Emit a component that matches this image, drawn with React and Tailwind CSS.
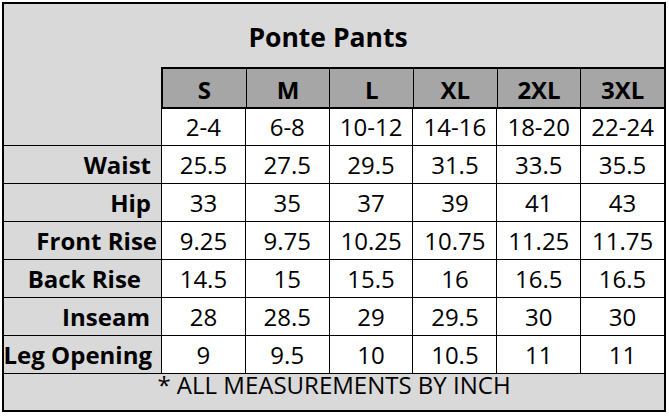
import React from 'react';

const sizes = ['S', 'M', 'L', 'XL', '2XL', '3XL'];
const ranges = ['2-4', '6-8', '10-12', '14-16', '18-20', '22-24'];

// pr = right padding of the label, the sheet doesn't line them up exactly
const rows = [
  { label: 'Waist', pr: 'pr-[10px]', values: ['25.5', '27.5', '29.5', '31.5', '33.5', '35.5'] },
  { label: 'Hip', pr: 'pr-[10px]', values: ['33', '35', '37', '39', '41', '43'] },
  { label: 'Front Rise', pr: 'pr-[4px]', values: ['9.25', '9.75', '10.25', '10.75', '11.25', '11.75'] },
  { label: 'Back Rise', pr: 'pr-[20px]', values: ['14.5', '15', '15.5', '16', '16.5', '16.5'] },
  { label: 'Inseam', pr: 'pr-[11px]', values: ['28', '28.5', '29', '29.5', '30', '30'] },
  { label: 'Leg Opening', pr: 'pr-[9px]', values: ['9', '9.5', '10', '10.5', '11', '11'] },
];

const Cell = ({ children }) => (
  <div className="flex-1 flex items-center justify-center border-l border-black bg-white">
    {children}
  </div>
);

export default function App() {
  return (
    <div className="w-[669px] h-[417px] bg-white pt-[2px] pl-[2px] font-['Open_Sans',sans-serif] text-black leading-none">
      <div className="w-[664px] h-[410px] border-2 border-black flex flex-col bg-[#d9d9d9] overflow-hidden">
        {/* title */}
        <div className="h-[63px] shrink-0 flex items-center justify-center pt-[3px] pr-[12px] text-[26.5px] font-bold">
          Ponte Pants
        </div>

        {/* sizes + ranges */}
        <div className="h-[79px] shrink-0 flex border-b border-black">
          <div className="w-[157px] shrink-0" />
          <div className="flex-1 flex flex-col">
            <div className="h-[42px] shrink-0 flex border-t-2 border-l-2 border-b-2 border-black bg-[#a6a6a6] text-[24px] font-bold">
              {sizes.map((s, i) => (
                <div
                  key={s}
                  className={`flex-1 flex items-center justify-center pt-[3px] ${i > 0 ? 'border-l border-black' : ''}`}
                >
                  {s}
                </div>
              ))}
            </div>
            <div className="h-[36px] shrink-0 flex text-[24px]">
              {ranges.map((r) => (
                <Cell key={r}>{r}</Cell>
              ))}
            </div>
          </div>
        </div>

        {/* measurements */}
        {rows.map((row) => (
          <div key={row.label} className="h-[38px] shrink-0 flex border-b border-black text-[24px]">
            <div className={`w-[157px] shrink-0 flex items-center justify-end font-bold whitespace-nowrap ${row.pr}`}>
              {row.label}
            </div>
            {row.values.map((v, i) => (
              <Cell key={i}>{v}</Cell>
            ))}
          </div>
        ))}

        {/* footer */}
        <div className="h-[36px] shrink-0 flex items-center justify-center pb-[14px] text-[24px]">
          * ALL MEASUREMENTS BY INCH
        </div>
      </div>
    </div>
  );
}
